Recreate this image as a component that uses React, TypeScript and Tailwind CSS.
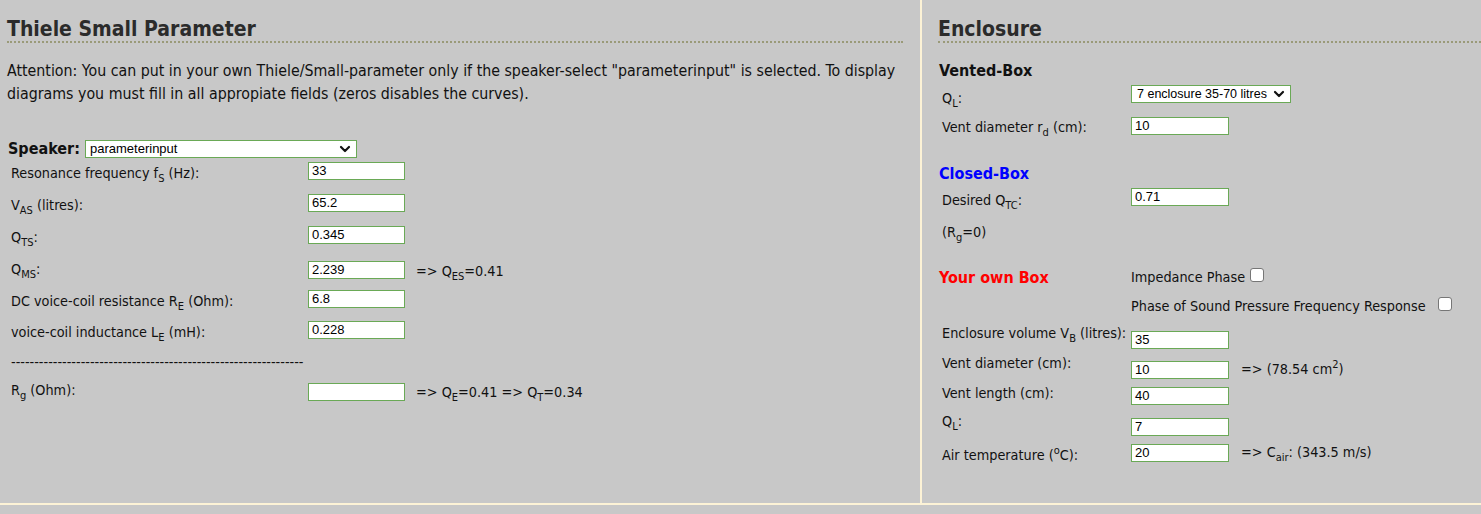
import React from 'react';

function Sub({ children }: { children: React.ReactNode }) {
  return <span className="relative top-[4px] text-[11px] leading-none">{children}</span>;
}

function Sup({ children }: { children: React.ReactNode }) {
  return <span className="relative top-[-6px] text-[11px] leading-none">{children}</span>;
}

function Field({ value, wide }: { value: string; wide?: boolean }) {
  return (
    <div
      className={`h-[18px] shrink-0 border border-[#6aa956] bg-white pl-[3px] font-['Liberation_Sans',Arial,sans-serif] text-[13px] leading-[16px] text-black ${
        wide ? 'w-[98px]' : 'w-[97px]'
      }`}
    >
      {value}
    </div>
  );
}

function Check() {
  return <span className="block h-[14px] w-[14px] shrink-0 rounded-[3px] border border-[#767676] bg-white" />;
}

function Chevron() {
  return (
    <svg width="12" height="8" viewBox="0 0 12 8" fill="none" stroke="#111" strokeWidth="2.2" strokeLinecap="round" strokeLinejoin="round">
      <path d="M2 2l4 4 4-4" />
    </svg>
  );
}

export default function App() {
  return (
    <div className="h-[514px] w-[1481px] overflow-hidden bg-[#c8c8c8] font-['DejaVu_Sans_Condensed','DejaVu_Sans',sans-serif] text-[14.3px] text-[#111]">
      <div className="flex h-[503px]">
        {/* Thiele Small Parameter */}
        <div className="w-[920px] shrink-0 pl-[7px] pr-[17px] pt-[17px]">
          <h2 className="border-b-2 border-dotted border-[#9a9a78] text-[21px] font-bold leading-[24px] text-[#2b2b2b]">
            Thiele Small Parameter
          </h2>
          <p className="mt-[16px] whitespace-nowrap text-[15.8px] leading-[23px]">
            Attention: You can put in your own Thiele/Small-parameter only if the speaker-select "parameterinput" is selected. To display
            <br />
            diagrams you must fill in all appropiate fields (zeros disables the curves).
          </p>

          <div className="mt-[35px] pl-px">
            <div className="flex h-[22px]">
              <div className="w-[77px] text-[16px] font-bold leading-[18px]">Speaker:</div>
              <div className="flex h-[18px] w-[272px] items-center justify-between border border-[#6aa956] bg-white pl-[4px] pr-[5px] font-['Liberation_Sans',Arial,sans-serif] text-[13px] text-black">
                <span>parameterinput</span>
                <Chevron />
              </div>
            </div>

            <div className="flex h-[32px]">
              <div className="mt-[2px] w-[300px] pl-[3px] leading-[18px]">
                Resonance frequency f<Sub>S</Sub> (Hz):
              </div>
              <Field value="33" />
            </div>
            <div className="flex h-[32px]">
              <div className="mt-[2px] w-[300px] pl-[3px] leading-[18px]">
                V<Sub>AS</Sub> (litres):
              </div>
              <Field value="65.2" />
            </div>
            <div className="flex h-[35px]">
              <div className="mt-[2px] w-[300px] pl-[3px] leading-[18px]">
                Q<Sub>TS</Sub>:
              </div>
              <Field value="0.345" />
            </div>
            <div className="flex h-[29px]">
              <div className="mt-[-1px] w-[300px] pl-[3px] leading-[18px]">
                Q<Sub>MS</Sub>:
              </div>
              <Field value="2.239" />
              <div className="ml-[11px] mt-px leading-[18px]">
                =&gt; Q<Sub>ES</Sub>=0.41
              </div>
            </div>
            <div className="flex h-[31px]">
              <div className="mt-[2px] w-[300px] pl-[3px] leading-[18px]">
                DC voice-coil resistance R<Sub>E</Sub> (Ohm):
              </div>
              <Field value="6.8" />
            </div>
            <div className="flex h-[32px]">
              <div className="mt-[2px] w-[300px] pl-[3px] leading-[18px]">
                voice-coil inductance L<Sub>E</Sub> (mH):
              </div>
              <Field value="0.228" />
            </div>
            <div className="h-[30px] whitespace-nowrap pl-[3px] leading-[18px]">
              ---------------------------------------------------------------
            </div>
            <div className="flex h-[30px]">
              <div className="mt-[-2px] w-[300px] pl-[3px] leading-[18px]">
                R<Sub>g</Sub> (Ohm):
              </div>
              <Field value="" />
              <div className="ml-[11px] leading-[18px]">
                =&gt; Q<Sub>E</Sub>=0.41 =&gt; Q<Sub>T</Sub>=0.34
              </div>
            </div>
          </div>
        </div>

        <div className="w-[2px] shrink-0 bg-[#fdf3d6]" />

        {/* Enclosure */}
        <div className="min-w-0 flex-1 pl-[16px] pt-[17px]">
          <h2 className="border-b-2 border-dotted border-[#9a9a78] text-[21px] font-bold leading-[24px] text-[#2b2b2b]">Enclosure</h2>

          <div className="pl-px">
            <div className="mt-[18px] text-[16px] font-bold leading-[20px]">Vented-Box</div>
            <div className="mt-[4px] flex h-[32px]">
              <div className="mt-[4px] w-[192px] pl-[3px] leading-[18px]">
                Q<Sub>L</Sub>:
              </div>
              <div className="flex h-[18px] w-[160px] items-center justify-between border border-[#6aa956] bg-white pl-[5px] pr-[5px] font-['Liberation_Sans',Arial,sans-serif] text-[12.5px] text-black">
                <span className="whitespace-nowrap">7 enclosure 35-70 litres</span>
                <Chevron />
              </div>
            </div>
            <div className="flex h-[47px]">
              <div className="mt-px w-[192px] pl-[3px] leading-[18px]">
                Vent diameter r<Sub>d</Sub> (cm):
              </div>
              <Field value="10" wide />
            </div>

            <div className="text-[16px] font-bold leading-[20px] text-[#0000ff]">Closed-Box</div>
            <div className="mt-[4px] flex h-[35px]">
              <div className="mt-[3px] w-[192px] pl-[3px] leading-[18px]">
                Desired Q<Sub>TC</Sub>:
              </div>
              <Field value="0.71" wide />
            </div>
            <div className="pl-[3px] leading-[18px]">
              (R<Sub>g</Sub>=0)
            </div>

            <div className="mt-[27px] flex h-[29px]">
              <div className="w-[192px] text-[16px] font-bold leading-[20px] text-[#ff0000]">Your own Box</div>
              <div className="leading-[18px]">Impedance Phase</div>
              <div className="ml-[5px]">
                <Check />
              </div>
            </div>
            <div className="flex h-[34px]">
              <div className="w-[192px]" />
              <div className="leading-[18px]">Phase of Sound Pressure Frequency Response</div>
              <div className="ml-[12px]">
                <Check />
              </div>
            </div>

            <div className="flex h-[30px]">
              <div className="mt-[-7px] w-[192px] pl-[3px] leading-[18px]">
                Enclosure volume V<Sub>B</Sub> (litres):
              </div>
              <Field value="35" wide />
            </div>
            <div className="flex h-[26px]">
              <div className="mt-[-7px] w-[192px] pl-[3px] leading-[18px]">Vent diameter (cm):</div>
              <Field value="10" wide />
              <div className="ml-[12px] mt-[-1px] leading-[18px]">
                =&gt; (78.54 cm<Sup>2</Sup>)
              </div>
            </div>
            <div className="flex h-[31px]">
              <div className="mt-[-3px] w-[192px] pl-[3px] leading-[18px]">Vent length (cm):</div>
              <Field value="40" wide />
            </div>
            <div className="flex h-[26px]">
              <div className="mt-[-6px] w-[192px] pl-[3px] leading-[18px]">
                Q<Sub>L</Sub>:
              </div>
              <Field value="7" wide />
            </div>
            <div className="flex h-[26px]">
              <div className="mt-[2px] w-[192px] pl-[3px] leading-[18px]">
                Air temperature (<Sup>o</Sup>C):
              </div>
              <Field value="20" wide />
              <div className="ml-[12px] mt-[-1px] leading-[18px]">
                =&gt; C<Sub>air</Sub>: (343.5 m/s)
              </div>
            </div>
          </div>
        </div>
      </div>
      <div className="h-[2px] bg-[#fdf3d6]" />
    </div>
  );
}
